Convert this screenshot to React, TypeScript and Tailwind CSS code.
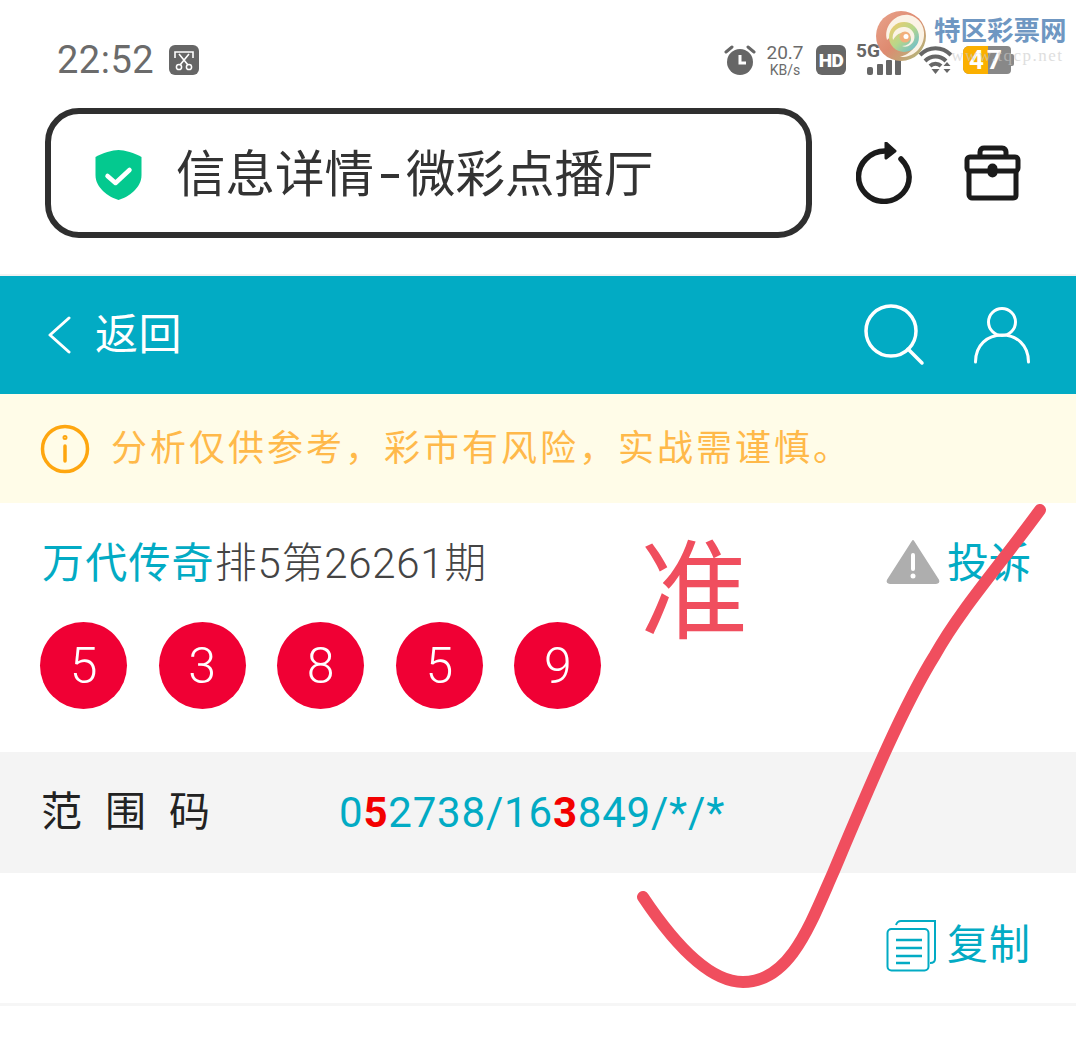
// App.tsx
const cjk = "font-['Roboto','Noto_Sans_CJK_SC',sans-serif]";
const balls = ['5', '3', '8', '5', '9'];

function StatusBar() {
  return (
    <div className="flex h-[108px] items-start justify-between pt-[40px] pl-[57px] pr-[62px]">
      <div className="flex h-10 items-center gap-[15px]">
        <span className="text-[38px] leading-10 text-[#6b6b6b] tracking-[0.5px]">22:52</span>
        <svg width="30" height="30" viewBox="0 0 30 30">
          <rect width="30" height="30" rx="6" fill="#666" />
          <path d="M6 13V7h18v6M10 9l9 11M20 9l-9 11" fill="none" stroke="#fff" strokeWidth="1.6" />
          <circle cx="10" cy="22" r="2.6" fill="#666" stroke="#fff" strokeWidth="1.5" />
          <circle cx="20" cy="22" r="2.6" fill="#666" stroke="#fff" strokeWidth="1.5" />
        </svg>
      </div>
      <div className="flex h-10 items-center">
        <svg width="32" height="32" viewBox="0 0 32 32" className="mr-[10px] ml-[-1px]">
          <circle cx="16" cy="18" r="13" fill="#666" />
          <path d="M16 11v8h6" fill="none" stroke="#fff" strokeWidth="3" />
          <path d="M2 8l6-5M30 8l-6-5" stroke="#666" strokeWidth="3" strokeLinecap="round" />
        </svg>
        <div className="mr-[12px] flex w-[38px] flex-col items-center text-[#6b6b6b]">
          <span className="text-[19px] leading-[19px]">20.7</span>
          <span className="mt-[1px] text-[14px] leading-[14px]">KB/s</span>
        </div>
        <div className="mr-[11px] flex h-[30px] w-[30px] items-center justify-center rounded-[6px] bg-[#666] text-[19px] font-black leading-none tracking-[-0.5px] text-white">HD</div>
        <svg width="44" height="34" viewBox="0 0 44 34" className="mr-[17px]">
          <rect x="10" y="24" width="6" height="8" rx="2" fill="#666" />
          <rect x="20" y="21" width="6" height="11" rx="1" fill="#666" />
          <rect x="29" y="17" width="6" height="15" rx="1" fill="#666" />
          <rect x="38" y="10" width="6" height="22" rx="1" fill="#666" />
        </svg>
        <svg width="36" height="28" viewBox="0 0 36 28" className="mr-[9px]">
          <path d="M2 9c9-9 22-9 31 0M7 15c6-6 15-6 21 0M12 20c3-3 8-3 11 0" fill="none" stroke="#666" strokeWidth="4" />
          <path d="M17.5 28l-4-5h8z" fill="#666" />
          <path d="M29 16l-3.500 4h7zM29 27l-3.500-4h7z" fill="#666" />
        </svg>
        <div className="relative flex h-[28px] w-[48px] items-center overflow-hidden rounded-l-[6px] rounded-r-[4px] bg-[#888]">
          <div className="absolute inset-y-0 left-0 w-[25px] bg-[#fbb000]" />
          <span className="relative w-full text-center text-[26px] font-bold leading-none tracking-[3px] text-white">47</span>
        </div>
        <div className="h-[12px] w-[3px] rounded-r-[2px] bg-[#888]" />
      </div>
    </div>
  );
}

function UrlBar() {
  return (
    <div className="flex h-[130px] items-center pl-[45px]">
      <div className="flex h-[130px] w-[767px] items-center rounded-[34px] border-[6px] border-[#2f2f2f] bg-white pl-[44px]">
        <svg width="47" height="50" viewBox="0 0 46 50" className="mr-[34px] mt-[4px]">
          <path d="M23 0c6 0 16 3 23 7v18c0 13-13 22-23 25C13 47 0 38 0 25V7C7 3 17 0 23 0z" fill="#04c98f" />
          <path d="M12 26l8 7 14-13" fill="none" stroke="#fff" strokeWidth="4.500" strokeLinecap="round" strokeLinejoin="round" />
        </svg>
        <span className={`${cjk} mt-[6px] flex items-center text-[49.500px] leading-none text-[#333]`}>
          信息详情<span className="mx-[7px] h-[4px] w-[18px] bg-[#333]" />微彩点播厅
        </span>
      </div>
      <svg width="58" height="62" viewBox="0 0 58 62" className="ml-[44px]" fill="none" stroke="#1b1b1b" strokeWidth="5.500">
        <path d="M45 17c11 11 10 25 2 34-10 11-27 11-37 1S0 27 10 17c5-5 12-8 19-8" strokeLinecap="round" />
        <path d="M30 1l9 8-9 7z" fill="#1b1b1b" strokeWidth="3" strokeLinejoin="round" />
      </svg>
      <svg width="58" height="56" viewBox="0 0 58 56" className="ml-[50px]" fill="none" stroke="#1b1b1b" strokeWidth="5">
        <path d="M16 12V7c0-3 2-4 4-4h18c3 0 4 2 4 4v5" />
        <rect x="3" y="12" width="51" height="14" rx="3" />
        <path d="M5 26v24c0 2 2 3 3 3h41c2 0 3-1 3-3V26" />
        <rect x="26" y="21" width="5" height="9" rx="2.500" fill="#1b1b1b" />
      </svg>
    </div>
  );
}

function NavBar() {
  return (
    <div className="mt-[36px] border-t-2 border-[#f2f2f2]">
      <div className="flex h-[118px] items-center bg-[#02abc4] pl-[47px] pr-[46px] text-white">
        <svg width="24" height="38" viewBox="0 0 24 38" fill="none" stroke="#fff" strokeWidth="3" strokeLinecap="round" strokeLinejoin="round">
          <path d="M22 2L3 19l19 17" />
        </svg>
        <span className={`${cjk} ml-[24px] text-[43px] leading-none tracking-[0.5px]`}>返回</span>
        <svg width="62" height="62" viewBox="0 0 62 62" className="ml-auto mr-[48px]" fill="none" stroke="#fff" strokeWidth="3.500" strokeLinecap="round">
          <circle cx="27" cy="27" r="25" />
          <path d="M44 45l14 14" />
        </svg>
        <svg width="56" height="58" viewBox="0 0 56 58" fill="none" stroke="#fff" strokeWidth="3" strokeLinecap="round">
          <circle cx="28" cy="16" r="13.500" />
          <path d="M1.500 56c0-17 12-27 26.500-27s26.500 10 26.500 27" />
        </svg>
      </div>
    </div>
  );
}

function Notice() {
  return (
    <div className="flex h-[109px] items-center bg-[#fffce8] pl-[40px]">
      <svg width="50" height="50" viewBox="0 0 50 50" fill="none" stroke="#fea60f" strokeWidth="3.500" strokeLinecap="round">
        <circle cx="25" cy="25" r="22.500" />
        <path d="M25 22v15" />
        <circle cx="25" cy="13.500" r="1" strokeWidth="3" />
      </svg>
      <span className={`${cjk} ml-[21px] text-[36px] leading-none tracking-[3px] text-[#ffb94a]`}>分析仅供参考，彩市有风险，实战需谨慎。</span>
    </div>
  );
}

function Result() {
  return (
    <div className="h-[249px] pl-[40px] pr-[45px]">
      <div className="flex h-[119px] items-center pt-[3px]">
        <span className={`${cjk} ml-[2px] text-[42px] leading-none tracking-[1.2px] text-[#02abc4]`}>万代传奇</span>
        <span className={`${cjk} text-[42px] font-light leading-none tracking-[0.7px] text-[#444]`}>排5第26261期</span>
        <svg width="54" height="46" viewBox="0 0 54 46" className="ml-auto mr-[7px] mb-[4px]">
          <path d="M27 2L52 41c1 2 0 3-2 3H4c-2 0-3-1-2-3z" fill="#aeaeae" stroke="#aeaeae" strokeWidth="2" strokeLinejoin="round" />
          <path d="M27 16v14" stroke="#fff" strokeWidth="4" strokeLinecap="round" />
          <circle cx="27" cy="37" r="2.500" fill="#fff" />
        </svg>
        <span className={`${cjk} text-[42px] leading-none text-[#02abc4]`}>投诉</span>
      </div>
      <div className="flex gap-[31.6px]">
        {balls.map((n, i) => (
          <div key={i} className="flex h-[87px] w-[87px] items-center justify-center rounded-full bg-[#f00034] text-[50px] font-light leading-none text-white">{n}</div>
        ))}
      </div>
    </div>
  );
}

function RangeRow() {
  return (
    <div className="flex h-[121px] items-center bg-[#f4f4f4] pl-[41px]">
      <span className={`${cjk} w-[298px] text-[41px] leading-none tracking-[23px] text-[#222]`}>范围码</span>
      <span className="text-[42px] leading-none tracking-[0.8px] text-[#02abc4]">
        0<b className="font-bold text-[#f30000]">5</b>2738/16<b className="font-bold text-[#f30000]">3</b>849/*/*
      </span>
    </div>
  );
}

function CopyRow() {
  return (
    <div className="flex h-[133px] items-center justify-end border-b-[3px] border-[#f6f6f6] pr-[45px] pt-[15px]">
      <svg width="52" height="52" viewBox="0 0 52 52" fill="none" stroke="#02abc4" strokeWidth="2" className="mr-[9px]">
        <path d="M10 5c1-3 3-4 5-4h34v38c0 3-2 4-5 4" />
        <rect x="1.500" y="9" width="41" height="41.500" rx="4" />
        <path d="M10 20h26M10 28h26M10 36h26M10 43h14" strokeWidth="2.500" />
      </svg>
      <span className={`${cjk} text-[41px] leading-none tracking-[1px] text-[#02abc4]`}>复制</span>
    </div>
  );
}

function SwirlLogo() {
  return (
    <svg width="50" height="52" viewBox="0 0 50 52">
      <defs>
        <linearGradient id="ball" x1="0" y1="0" x2="1" y2="1">
          <stop offset="0" stopColor="#e9a48c" />
          <stop offset="0.5" stopColor="#de8a70" />
          <stop offset="1" stopColor="#a9c07c" />
        </linearGradient>
        <linearGradient id="swirl" x1="0" y1="0" x2="1" y2="1">
          <stop offset="0" stopColor="#f7c96a" />
          <stop offset="0.5" stopColor="#b7d78a" />
          <stop offset="1" stopColor="#5db8dc" />
        </linearGradient>
      </defs>
      <circle cx="25" cy="26" r="25" fill="url(#ball)" />
      <path d="M11 30C7 16 20 3 33 5c10 2 16 11 15 21-1 13-12 22-24 21 11-3 19-12 17-23C39 13 22 12 17 22c-2 3-3 6-6 8z" fill="#fbf3e6" />
      <circle cx="28" cy="27" r="15" fill="url(#swirl)" />
      <path d="M17 30c-2-8 5-14 12-13 7 1 11 7 9 13-2 5-7 8-12 6 5 0 9-3 9-7 0-5-6-8-10-6-4 1-6 4-8 7z" fill="#fbf3e6" />
      <circle cx="29" cy="27" r="5.500" fill="#f2b07c" />
      <circle cx="30" cy="26.500" r="2.500" fill="#fff" />
    </svg>
  );
}

export default function App() {
  return (
    <div className="relative h-[1064px] w-[1076px] overflow-hidden bg-white font-['Roboto',sans-serif]">
      <StatusBar />
      <UrlBar />
      <NavBar />
      <Notice />
      <Result />
      <RangeRow />
      <CopyRow />

      {/* hand written marks on top of the screenshot */}
      <span className={`${cjk} absolute left-[640px] top-[539px] text-[108px] leading-none text-[#f04e5e]`}>准</span>
      <svg width="1076" height="1064" viewBox="0 0 1076 1064" fill="none" className="absolute inset-0">
        <path
          d="M1040 510C1000 565 960 610 935 655C902 708 868 790 833 873C810 925 790 982 743 982C710 982 675 945 643 897"
          stroke="#f04e5e"
          strokeWidth="12"
          strokeLinecap="round"
        />
      </svg>

      {/* site watermark */}
      <div className="absolute left-[876px] top-[10px] flex items-start">
        <SwirlLogo />
        <div className="ml-[8px] mt-[7px] flex flex-col items-end">
          <span className={`${cjk} text-[26.500px] font-bold leading-[28px] text-[#6f97c2]`}>特区彩票网</span>
          <span className="mr-[3px] mt-[2px] font-['Liberation_Serif',serif] text-[17px] leading-none tracking-[1.5px] text-[#c9c9c9] opacity-60">www.tqcp.net</span>
        </div>
      </div>
      <span className="absolute left-[856px] top-[41px] text-[19px] font-bold leading-none text-[#666]">5G</span>
    </div>
  );
}
